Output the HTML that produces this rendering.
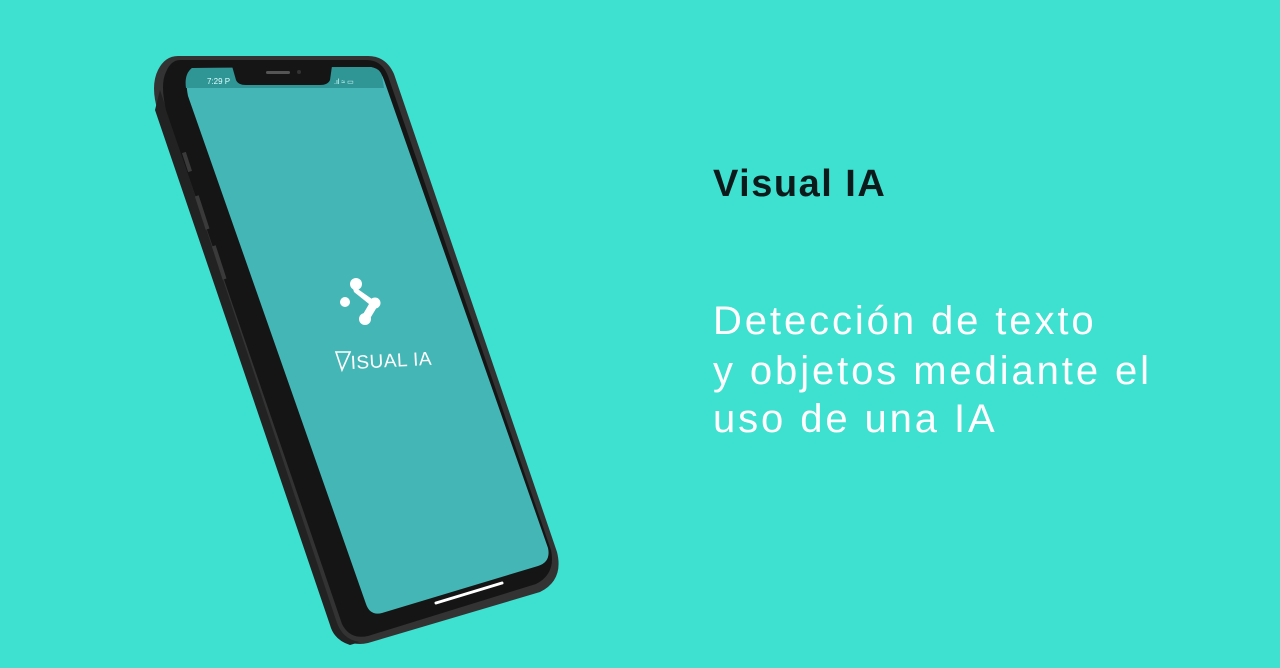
<!DOCTYPE html>
<html><head><meta charset="utf-8"><style>
html,body{margin:0;padding:0;width:1280px;height:668px;overflow:hidden;background:#3ee0d0;font-family:"Liberation Sans",sans-serif}
.t{position:absolute;left:713px;white-space:nowrap}
#title{top:163px;font-size:38px;color:#0b1a1a;font-weight:bold;letter-spacing:1.5px}
.b{font-size:40px;color:#fff;letter-spacing:2.9px;line-height:50px}
</style></head><body>
<svg width="1280" height="668" style="position:absolute;left:0;top:0">
  <path d="M178,56 L368,56 Q386,56 394,74 L557,552 Q564,580 540,592 L368,643 Q346,648 336,628 L158,112 Q150,86 158,70 Q165,56 178,56 Z" fill="#333"/>
  <path d="M160,90 L336,620 Q342,640 360,642 L350,645 Q334,640 330,625 L155,110 Z" fill="#222"/>
  <path d="M180,60 L366,60 Q382,60 388,76 L551,550 Q556,574 536,584 L368,636 Q350,640 342,624 L166,110 Q160,84 166,72 Q171,60 180,60 Z" fill="#151515"/>
  <path d="M192,68 L370,67 Q380,68 384,80 L548,548 Q551,562 538,566 L382,613 Q370,616 366,604 L188,96 Q184,76 192,68 Z" fill="#45b6b6"/>
  <path d="M192,68 L370,67 Q380,68 382,76 L384,88 L186,88 Q184,74 192,68 Z" fill="#2f9595"/>
  <path d="M232,66 L332,66 L330,80 Q328,85 320,85 L246,85 Q238,85 236,80 Z" fill="#151515"/>
  <rect x="266" y="71" width="24" height="3" rx="1.5" fill="#555"/>
  <circle cx="299" cy="72" r="2" fill="#333"/>
  <text x="207" y="84" font-size="8" fill="#dff" font-family="Liberation Sans">7:29 P</text>
  <text x="334" y="84" font-size="7" fill="#dff" font-family="Liberation Sans">.ıl ≈ ▭</text>
  <rect x="185" y="152" width="4" height="20" fill="#3a3a3a" transform="rotate(-18 187 162)"/>
  <rect x="200" y="195" width="4" height="35" fill="#3a3a3a" transform="rotate(-18 202 212)"/>
  <rect x="217" y="245" width="4" height="35" fill="#3a3a3a" transform="rotate(-18 219 262)"/>
  <line x1="436" y1="603" x2="502" y2="583" stroke="#fff" stroke-width="3" stroke-linecap="round"/>
  <g fill="#fff">
    <circle cx="356" cy="284" r="6"/>
    <circle cx="375" cy="303" r="5.5"/>
    <circle cx="365" cy="319" r="6"/>
    <circle cx="345" cy="302" r="5"/>
    <path d="M352,285 L372,299 L377,307 L368,322 L362,316 L369,304 L354,292 Z"/>
  </g>
  <g fill="none" stroke="#fff" stroke-width="1.6">
    <path d="M336,352 L350,352 L342,370 Z"/>
  </g>
  <text x="351" y="369" font-size="19" fill="#fff" font-family="Liberation Sans" letter-spacing="0.5" transform="rotate(-3 351 369)">ISUAL IA</text>
</svg>
<div class="t" id="title">Visual IA</div>
<div class="t b" style="top:296px">Detección de texto</div>
<div class="t b" style="top:346px">y objetos mediante el</div>
<div class="t b" style="top:394px">uso de una IA</div>
</body></html>
